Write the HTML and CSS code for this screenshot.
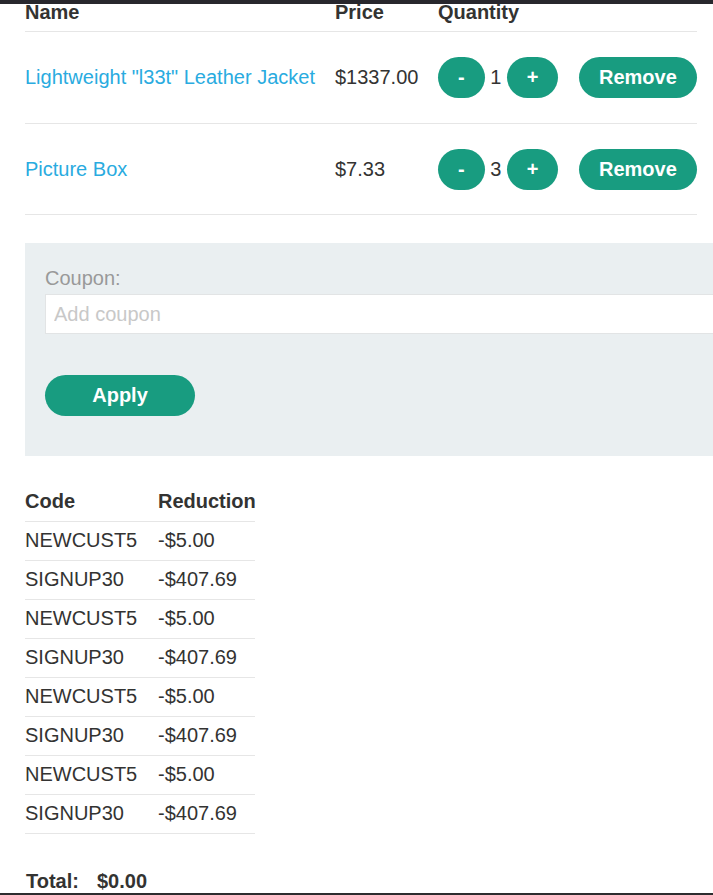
FILE: index.html
```html
<!DOCTYPE html>
<html lang="en">
<head>
<meta charset="utf-8">
<title>Cart</title>
<link rel="stylesheet" href="styles.css">
</head>
<body>
<div class="top-bar"></div>
<div class="viewport">
  <div class="page">
    <div class="cart">
      <div class="cart-row cart-head">
        <div>Name</div>
        <div>Price</div>
        <div>Quantity</div>
        <div></div>
      </div>
      <div class="cart-row">
        <a class="product-link" href="#">Lightweight "l33t" Leather Jacket</a>
        <div>$1337.00</div>
        <div class="qty">
          <button class="btn">-</button>
          <span>1</span>
          <button class="btn">+</button>
        </div>
        <div><button class="btn">Remove</button></div>
      </div>
      <div class="cart-row cart-row-last">
        <a class="product-link" href="#">Picture Box</a>
        <div>$7.33</div>
        <div class="qty">
          <button class="btn">-</button>
          <span>3</span>
          <button class="btn">+</button>
        </div>
        <div><button class="btn">Remove</button></div>
      </div>
    </div>

    <div class="coupon-box">
      <label class="coupon-label" for="coupon">Coupon:</label>
      <input class="coupon-input" id="coupon" type="text" placeholder="Add coupon">
      <button class="btn btn-apply">Apply</button>
    </div>

    <div class="reductions">
      <div class="red-row red-head"><div>Code</div><div>Reduction</div></div>
      <div class="red-row"><div>NEWCUST5</div><div>-$5.00</div></div>
      <div class="red-row"><div>SIGNUP30</div><div>-$407.69</div></div>
      <div class="red-row"><div>NEWCUST5</div><div>-$5.00</div></div>
      <div class="red-row"><div>SIGNUP30</div><div>-$407.69</div></div>
      <div class="red-row"><div>NEWCUST5</div><div>-$5.00</div></div>
      <div class="red-row"><div>SIGNUP30</div><div>-$407.69</div></div>
      <div class="red-row"><div>NEWCUST5</div><div>-$5.00</div></div>
      <div class="red-row"><div>SIGNUP30</div><div>-$407.69</div></div>
    </div>

    <div class="total">
      <span>Total:</span>
      <span>$0.00</span>
    </div>
  </div>
</div>
<div class="bottom-bar"></div>
</body>
</html>
```

FILE: styles.css
```css
html, body {
  margin: 0;
  padding: 0;
  background: #ffffff;
}

body {
  font-family: "Liberation Sans", Arial, sans-serif;
  font-size: 20px;
  line-height: 23px;
  color: #333332;
}

.top-bar {
  position: fixed;
  top: 0;
  left: 0;
  right: 0;
  height: 4px;
  background: #28272d;
  z-index: 10;
}

.bottom-bar {
  position: fixed;
  bottom: 0;
  left: 0;
  right: 0;
  height: 2px;
  background: #2c2c2e;
  z-index: 10;
}

.viewport {
  width: 713px;
  height: 895px;
  overflow: hidden;
}

.page {
  padding-left: 25px;
}

.cart {
  width: 672px;
}

.cart-row {
  display: grid;
  grid-template-columns: 310px 103px 141px 118px;
  align-items: center;
  padding: 25px 0;
  border-bottom: 1px solid #e6e6e6;
}

.cart-row-last {
  padding-bottom: 24px;
}

.cart-head {
  padding: 1px 0 7px;
  font-weight: bold;
}

.product-link {
  color: #29abe0;
  text-decoration: none;
}

.qty {
  display: flex;
  align-items: center;
  gap: 5.5px;
}

.btn {
  height: 41px;
  padding: 0 20px;
  border: none;
  border-radius: 21px;
  background: #189c80;
  color: #ffffff;
  font-family: "Liberation Sans", Arial, sans-serif;
  font-size: 20px;
  font-weight: bold;
  line-height: 23px;
  cursor: pointer;
}

.coupon-box {
  width: 720px;
  margin-top: 28px;
  padding: 24px 20px 40px;
  background: #eaeff1;
  box-sizing: border-box;
}

.coupon-label {
  display: block;
  color: #999999;
  margin-bottom: 4px;
}

.coupon-input {
  display: block;
  width: 100%;
  height: 40px;
  box-sizing: border-box;
  padding: 0 8px;
  border: 1px solid #e2e4e5;
  background: #ffffff;
  font-family: "Liberation Sans", Arial, sans-serif;
  font-size: 20px;
  color: #333332;
  outline: none;
}

.coupon-input::placeholder {
  color: #c8c8c8;
}

.btn-apply {
  display: block;
  width: 150px;
  margin-top: 41px;
}

.reductions {
  width: 230px;
  margin-top: 34px;
}

.red-row {
  display: grid;
  grid-template-columns: 133px auto;
  padding: 7px 0 8px;
  border-bottom: 1px solid #e6e6e6;
}

.red-head {
  padding: 0 0 8px;
  font-weight: bold;
}

.total {
  display: flex;
  gap: 18px;
  margin-top: 36px;
  padding-left: 1px;
  font-weight: bold;
}
```
